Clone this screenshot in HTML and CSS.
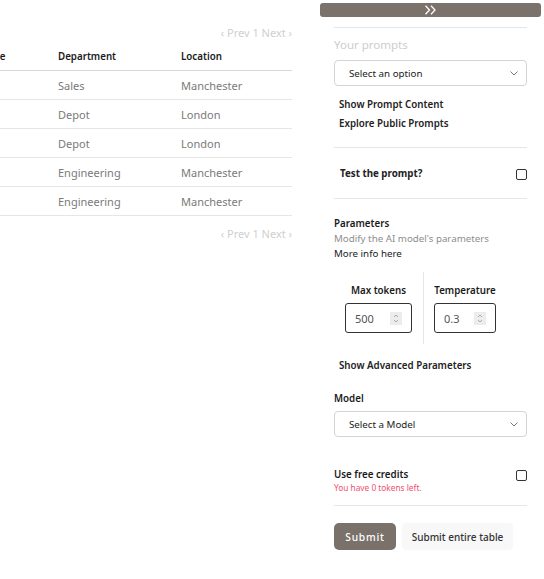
FILE: index.html
```html
<!DOCTYPE html>
<html lang="en">
<head>
<meta charset="utf-8">
<title>Prompt table</title>
<link rel="stylesheet" href="styles.css">
</head>
<body>
<div class="page">
  <section class="table-area">
    <div class="pager">‹ Prev 1 Next ›</div>
    <div class="grid">
      <div class="row head"><div>Name</div><div>Department</div><div>Location</div></div>
      <div class="row"><div></div><div>Sales</div><div>Manchester</div></div>
      <div class="row"><div></div><div>Depot</div><div>London</div></div>
      <div class="row"><div></div><div>Depot</div><div>London</div></div>
      <div class="row"><div></div><div>Engineering</div><div>Manchester</div></div>
      <div class="row"><div></div><div>Engineering</div><div>Manchester</div></div>
    </div>
    <div class="pager pager-bottom">‹ Prev 1 Next ›</div>
  </section>

  <aside class="panel">
    <div class="toggle">
      <svg width="14" height="10" viewBox="0 0 14 10"><polyline points="1.5,0.8 5.5,5 1.5,9.2" fill="none" stroke="#fff" stroke-width="1.3"/><polyline points="7,0.8 11,5 7,9.2" fill="none" stroke="#fff" stroke-width="1.3"/></svg>
    </div>
    <div class="content">
      <hr class="rule first">
      <div class="muted-title">Your prompts</div>
      <div class="select s1"><span>Select an option</span><svg class="chev" width="8" height="5" viewBox="0 0 8 5"><polyline points="0.5,0.5 4,4 7.5,0.5" fill="none" stroke="#777" stroke-width="1"/></svg></div>
      <div class="link l1">Show Prompt Content</div>
      <div class="link l2">Explore Public Prompts</div>
      <hr class="rule r2">
      <div class="check-row test"><span class="strong">Test the prompt?</span><span class="box"></span></div>
      <hr class="rule r3">
      <div class="label params-title">Parameters</div>
      <div class="hint">Modify the AI model's parameters</div>
      <div class="info">More info here</div>
      <div class="params">
        <div class="param left">
          <div class="label">Max tokens</div>
          <div class="num w67"><span>500</span><span class="spin"><svg width="6" height="9" viewBox="0 0 6 9"><polyline points="1,3 3,1 5,3" fill="none" stroke="#999" stroke-width="0.8"/><polyline points="1,6 3,8 5,6" fill="none" stroke="#999" stroke-width="0.8"/></svg></span></div>
        </div>
        <div class="param right">
          <div class="label">Temperature</div>
          <div class="num w62"><span>0.3</span><span class="spin"><svg width="6" height="9" viewBox="0 0 6 9"><polyline points="1,3 3,1 5,3" fill="none" stroke="#999" stroke-width="0.8"/><polyline points="1,6 3,8 5,6" fill="none" stroke="#999" stroke-width="0.8"/></svg></span></div>
        </div>
      </div>
      <div class="link adv">Show Advanced Parameters</div>
      <div class="label model-title">Model</div>
      <div class="select s2"><span>Select a Model</span><svg class="chev" width="8" height="5" viewBox="0 0 8 5"><polyline points="0.5,0.5 4,4 7.5,0.5" fill="none" stroke="#777" stroke-width="1"/></svg></div>
      <div class="check-row credits"><span class="label">Use free credits</span><span class="box"></span></div>
      <div class="warn">You have 0 tokens left.</div>
      <hr class="rule r4">
      <div class="actions">
        <button class="btn primary">Submit</button>
        <button class="btn secondary">Submit entire table</button>
      </div>
    </div>
  </aside>
</div>
</body>
</html>
```

FILE: styles.css
```css
* { box-sizing: border-box; }
html, body { margin: 0; padding: 0; background: #fff; }
body {
  font-family: "Noto Sans", "Open Sans", sans-serif;
  font-size: 11px;
  color: #222;
  width: 544px;
  height: 579px;
  overflow: hidden;
}
.page { display: flex; align-items: flex-start; }

.table-area { width: 292px; overflow: hidden; padding-top: 24px; flex: none; }
.pager { text-align: right; color: #cfcfcf; line-height: 17px; height: 17px; font-size: 11px; }
.pager-bottom { margin-top: 9px; }
.grid { width: 334px; margin-left: -42px; }
.row {
  display: grid;
  grid-template-columns: 88px 123px 123px;
  height: 29px;
  align-items: center;
  border-bottom: 1px solid #e6e6e6;
  color: #7a7a7a;
}
.row > div { padding: 0 12px; white-space: nowrap; }
.row.head { height: 30px; padding-top: 2px; border-bottom: 1px solid #d6d6d6; color: #1a1a1a; font-weight: 600; font-size: 9.75px; }
.row.head > div:first-child { padding-left: 19px; }

.panel { width: 221px; margin-left: 28px; flex: none; }
.toggle {
  margin-top: 3px;
  height: 14px;
  background: #7b726c;
  border-radius: 3px;
  display: flex;
  align-items: center;
  justify-content: center;
}
.toggle svg { display: block; }
.content { padding: 0 14px; }
.rule { border: 0; border-top: 1px solid #e6e6e6; margin: 0; height: 0; }
.rule.first { margin-top: 10px; }
.muted-title { margin-top: 9px; line-height: 16px; color: #cdcdcd; font-size: 11.5px; }
.select {
  display: flex;
  align-items: center;
  justify-content: space-between;
  height: 26px;
  border: 1px solid #d2d4d8;
  border-radius: 4px;
  padding: 0 8px 0 14px;
  color: #222;
  font-size: 9.75px;
}
.select.s1 { margin-top: 7px; }
.select.s2 { margin-top: 4px; }
.chev { display: block; }
.link { font-weight: 600; line-height: 16px; padding-left: 5px; font-size: 9.75px; color: #222; }
.link.l1 { margin-top: 11px; }
.link.l2 { margin-top: 3px; }
.rule.r2 { margin-top: 15px; }
.check-row { display: flex; align-items: center; justify-content: space-between; line-height: 16px; }
.check-row.test { margin-top: 18px; padding-left: 6px; }
.strong { font-weight: 700; font-size: 9.75px; }
.box { width: 11px; height: 11px; border: 1.3px solid #333; border-radius: 2px; display: block; }
.rule.r3 { margin-top: 16px; }
.label { font-weight: 600; line-height: 16px; font-size: 9.75px; color: #1a1a1a; }
.params-title { margin-top: 17px; }
.hint { color: #8e8e8e; line-height: 14px; font-size: 9.75px; }
.info { line-height: 14px; margin-top: 1px; font-size: 9.75px; color: #222; }
.params { display: flex; margin-top: 11px; }
.param { display: flex; flex-direction: column; align-items: center; padding: 11px 0 11px; }
.param.left { width: 90px; border-right: 1px solid #e6e6e6; }
.param.right { padding-left: 10px; }
.num {
  margin-top: 4px;
  height: 30px;
  border: 1px solid #333;
  border-radius: 3px;
  display: flex;
  align-items: center;
  justify-content: space-between;
  padding: 0 9px 0 9px;
  color: #555;
  font-size: 11px;
}
.num.w67 { width: 67px; }
.num.w62 { width: 62px; }
.spin { width: 12px; height: 13px; background: #ececec; display: flex; align-items: center; justify-content: center; }
.spin svg { display: block; }
.link.adv { margin-top: 14px; }
.model-title { margin-top: 17px; }
.check-row.credits { margin-top: 30px; line-height: 14px; }
.warn { color: #f0506e; font-size: 8.3px; line-height: 12px; margin-top: -1px; }
.rule.r4 { margin-top: 11px; }
.actions { display: flex; gap: 6px; margin-top: 17px; }
.btn {
  font-family: inherit;
  height: 27px;
  border: 0;
  border-radius: 5px;
  padding: 0;
  font-size: 10px;
  cursor: pointer;
}
.btn.primary { width: 62px; background: #7b716b; color: #fff; font-weight: 500; letter-spacing: 0.8px; font-size: 10.25px; }
.btn.secondary { width: 111px; background: #f8f8f8; color: #333; font-weight: 500; box-shadow: 0 0 1px rgba(0,0,0,0.06); }
```
